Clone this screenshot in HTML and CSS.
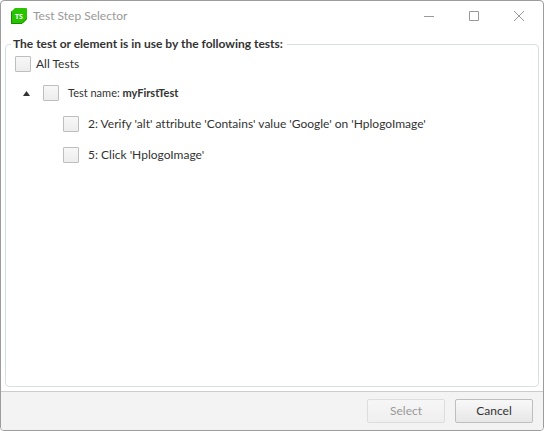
FILE: index.html
```html
<!DOCTYPE html>
<html lang="en">
<head>
<meta charset="utf-8">
<title>Test Step Selector</title>
<link rel="stylesheet" href="styles.css">
</head>
<body>
<div class="window">
  <header class="titlebar">
    <svg class="logo" viewBox="0 0 16 16" aria-hidden="true">
      <path d="M4 0H15Q16 0 16 1V11L11 16H1Q0 16 0 15V4Z" fill="#28c400"/>
      <path d="M0 4V15Q0 16 1 16H11L12 15H1V3ZM16 11L11 16V15L16 10Z" fill="#168a06"/>
      <text class="logo-text" x="8" y="11" text-anchor="middle">TS</text>
    </svg>
    <h1 class="title">Test Step Selector</h1>
    <button class="caption" type="button" aria-label="Minimize"><svg viewBox="0 0 10 10"><path d="M0 5.5H10"/></svg></button>
    <button class="caption" type="button" aria-label="Maximize"><svg viewBox="0 0 10 10"><path d="M.5 .5H9.5V9.5H.5Z"/></svg></button>
    <button class="caption" type="button" aria-label="Close"><svg viewBox="0 0 10 10"><path d="M0 0L10 10M10 0L0 10"/></svg></button>
  </header>
  <main class="content">
    <fieldset class="group">
      <legend>The test or element is in use by the following tests:</legend>
      <label class="row all"><input type="checkbox"><span>All Tests</span></label>
      <div class="node">
        <button class="toggle" type="button" aria-label="Collapse" aria-expanded="true"><svg viewBox="0 0 7 5"><path d="M3.5 0L7 5H0Z"/></svg></button>
        <label class="row name"><input type="checkbox"><span>Test name: <b>myFirstTest</b></span></label>
      </div>
      <ul class="steps">
        <li><label class="row step"><input type="checkbox"><span>2: Verify 'alt' attribute 'Contains' value 'Google' on 'HplogoImage'</span></label></li>
        <li><label class="row step"><input type="checkbox"><span>5: Click 'HplogoImage'</span></label></li>
      </ul>
    </fieldset>
  </main>
  <footer class="actions">
    <button class="button" type="button" disabled>Select</button>
    <button class="button" type="button">Cancel</button>
  </footer>
</div>
</body>
</html>
```
FILE: styles.css
```css
* { box-sizing: border-box; }
body {
  margin: 0;
  background: #fff;
  color: #333;
  font: 12px/16px Lato, "Open Sans", sans-serif;
  font-variant-ligatures: none;
}
.window {
  display: flex;
  flex-direction: column;
  min-height: 100vh;
  border: 1px solid #9c9c9c;
  border-radius: 4px;
  background: #fff;
  overflow: hidden;
}
.titlebar {
  display: flex;
  align-items: center;
  height: 30px;
  padding: 0 2px 0 10px;
}
.logo { width: 16px; height: 16px; }
.logo-text { fill: #fff; font: 700 7px "Open Sans", sans-serif; }
.title {
  flex: 1;
  margin: 0 0 0 6px;
  color: #999;
  font-size: 12px;
  font-weight: 400;
}
.caption {
  display: grid;
  place-items: center;
  width: 45px;
  height: 30px;
  padding: 0;
  border: 0;
  background: none;
}
.caption svg { width: 10px; height: 10px; fill: none; stroke: #999; }
.content {
  display: flex;
  flex: 1;
  padding: 5px 4px 4px;
}
.group {
  flex: 1;
  min-width: 0;
  margin: 0;
  padding: 4px 9px;
  border: 1px solid #d5dfe5;
  border-radius: 4px;
}
legend {
  margin-left: -4px;
  padding: 0 4px 0 2px;
  font-weight: 700;
}
.row { display: flex; align-items: center; }
.all { gap: 5px; }
.name { gap: 9px; font-size: 11px; }
.step { gap: 9px; }
input {
  appearance: none;
  flex: none;
  width: 16px;
  height: 16px;
  margin: 0;
  border: 1px solid #bebebe;
  border-radius: 1px;
  background: linear-gradient(#f7f7f7, #ededed);
}
.node {
  display: flex;
  align-items: center;
  margin-top: 13px;
}
.toggle {
  display: grid;
  place-items: center;
  width: 22px;
  height: 16px;
  margin-right: 6px;
  padding: 0;
  border: 0;
  background: none;
}
.toggle svg { width: 7px; height: 5px; fill: #333; }
.steps {
  display: grid;
  gap: 15px;
  margin: 15px 0 0;
  padding: 0 0 0 48px;
  list-style: none;
}
.actions {
  display: flex;
  justify-content: flex-end;
  gap: 10px;
  padding: 7px 10px;
  border-top: 1px solid #ccc;
  background: #f3f3f3;
}
.button {
  width: 78px;
  height: 24px;
  padding: 0;
  border: 1px solid #bebebe;
  border-radius: 2px;
  background: linear-gradient(#f8f8f8, #e7e7e7);
  color: #333;
  font: inherit;
}
.button:disabled {
  border-color: #ddd;
  background: linear-gradient(#f6f6f6, #efefef);
  color: #999;
}
```
